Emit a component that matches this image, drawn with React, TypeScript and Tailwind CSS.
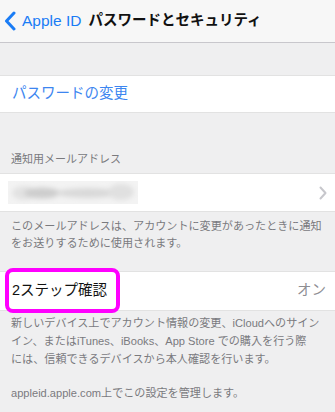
import React from 'react';

const font = { fontFamily: '"Liberation Sans", "Noto Sans CJK JP", sans-serif' };

function BackChevron() {
  return (
    <svg width="12" height="20" viewBox="0 0 12 20" className="shrink-0">
      <path d="M10 2 L2.5 10 L10 18" fill="none" stroke="#1a7cf5" strokeWidth="3" strokeLinecap="round" strokeLinejoin="round" />
    </svg>
  );
}

function RowChevron() {
  return (
    <svg width="8" height="14" viewBox="0 0 8 14">
      <path d="M1.5 1.5 L6.5 7 L1.5 12.5" fill="none" stroke="#c7c7cc" strokeWidth="2" strokeLinecap="round" strokeLinejoin="round" />
    </svg>
  );
}

// blurred-out address
function BlurredEmail() {
  return (
    <svg width="130" height="23" viewBox="0 0 130 23">
      <defs>
        <filter id="b" x="-20%" y="-60%" width="140%" height="220%">
          <feGaussianBlur stdDeviation="2.5" />
        </filter>
      </defs>
      <rect width="130" height="23" fill="#f3f3f3" />
      <g filter="url(#b)">
        <ellipse cx="16" cy="12" rx="12" ry="7" fill="#e2e2e2" />
        <ellipse cx="34" cy="12" rx="18" ry="5.5" fill="#cdcdcd" />
        <ellipse cx="80" cy="12" rx="32" ry="5" fill="#d9d9d9" />
        <ellipse cx="113" cy="11" rx="13" ry="8" fill="#e0e0e0" />
      </g>
    </svg>
  );
}

export default function App() {
  return (
    <div className="w-[335px] h-[412px] overflow-hidden bg-[#efeff0]" style={font}>
      <div className="h-[43px] bg-[#f7f7f7] border-b border-[#c8c7cc] flex items-center pl-[4px]">
        <BackChevron />
        <span className="ml-[6px] text-[15.5px] text-[#1a7cf5]">Apple ID</span>
        <span className="ml-[7px] text-[14.5px] font-bold text-[#111]">パスワードとセキュリティ</span>
      </div>

      <div className="h-[32px]" />

      <div className="h-[38px] bg-white border-y border-[#e2e2e2] flex items-center px-3">
        <span className="text-[14.5px] text-[#3d86f0]">パスワードの変更</span>
      </div>

      <div className="h-[60px] flex items-end px-[11px] pb-[7px]">
        <span className="text-[11px] leading-[14px] text-[#7a7a7e]">通知用メールアドレス</span>
      </div>

      <div className="h-[39px] bg-white border-y border-[#e2e2e2] flex items-center justify-between pl-[8px] pr-[8px]">
        <BlurredEmail />
        <RowChevron />
      </div>

      <div className="h-[59px] px-[11px] pt-[6px] text-[11.1px] leading-[17px] text-[#7a7a7e] whitespace-nowrap">
        <div>このメールアドレスは、アカウントに変更があったときに通知</div>
        <div>をお送りするために使用されます。</div>
      </div>

      <div className="relative h-[40px] bg-white border-y border-[#e2e2e2] flex items-center justify-between pl-3 pr-[9px]">
        <span className="text-[14.5px] text-[#111]">2ステップ確認</span>
        <span className="text-[14.5px] text-[#8e8e93]">オン</span>
        <div className="absolute left-[5px] top-[-4px] w-[115px] h-[45px] border-[4px] border-[#ff00ff] rounded-[8px]" />
      </div>

      <div className="px-[11px] pt-[3px] text-[11.1px] leading-[18px] text-[#7a7a7e] whitespace-nowrap">
        <div>新しいデバイス上でアカウント情報の変更、iCloudへのサイン</div>
        <div>イン、またはiTunes、iBooks、App Store での購入を行う際</div>
        <div>には、信頼できるデバイスから本人確認を行います。</div>
        <div className="mt-[16px]">appleid.apple.com上でこの設定を管理します。</div>
      </div>
    </div>
  );
}
